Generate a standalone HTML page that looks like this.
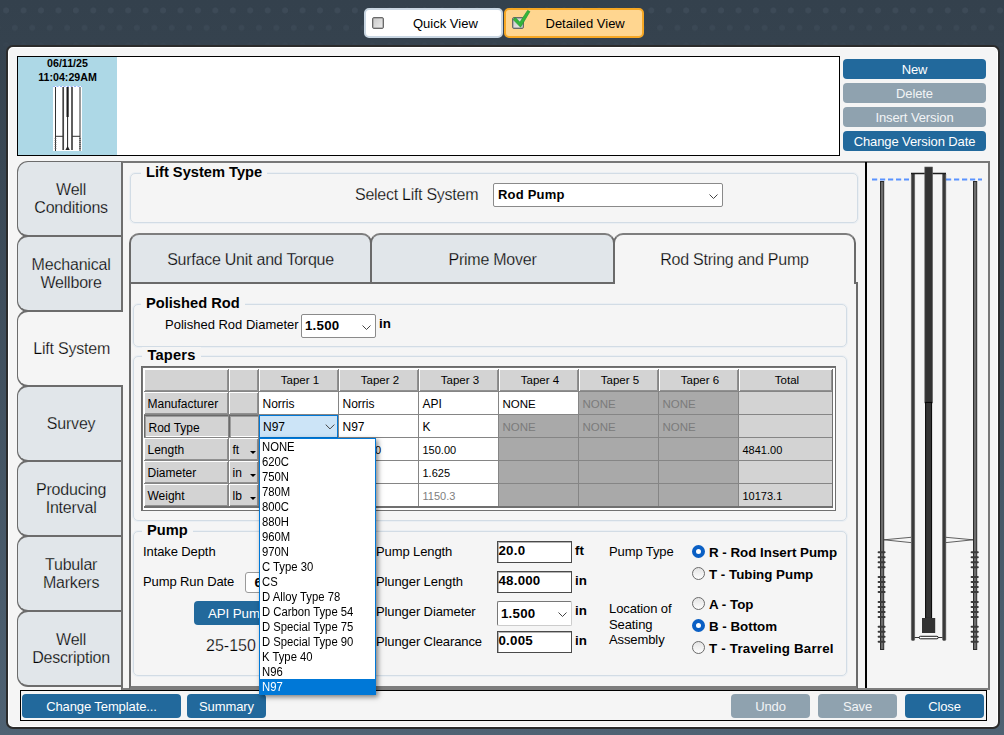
<!DOCTYPE html>
<html>
<head>
<meta charset="utf-8">
<title>Well Configuration</title>
<style>
*{box-sizing:border-box;margin:0;padding:0}
html,body{width:1004px;height:735px;overflow:hidden}
body{font-family:"Liberation Sans",sans-serif;font-size:14px;color:#000;background:linear-gradient(#34414d 0,#35424e 6%,#4f6273 100%);position:relative}
.abs{position:absolute}
#dots{left:0;top:0;width:1004px;height:46px;
 background-image:radial-gradient(circle,#3d4a57 0,#3d4a57 2.7px,transparent 3.4px),radial-gradient(circle,#3d4a57 0,#3d4a57 2.7px,transparent 3.4px);
 background-size:17.45px 35px,17.45px 35px;background-position:-2.6px -7.1px,6.1px 10.4px;
 -webkit-mask-image:linear-gradient(#000 0,#000 40%,rgba(0,0,0,.25) 100%);mask-image:linear-gradient(#000 0,#000 40%,rgba(0,0,0,.25) 100%)}
#main{left:6px;top:45px;width:994px;height:683.5px;background:#f5f5f5;border:2px solid #2b2b2b;border-radius:7px;box-shadow:inset 0 0 0 1px #fff}
.btn{position:absolute;background:#22699c;color:#fff;border-radius:4px;text-align:center;font-size:13px;letter-spacing:-.1px;line-height:21px;height:20px}
.btn.dis{background:#8fa2af;color:#f2f4f6}
/* top toggles */
.tog{position:absolute;top:8px;height:30px;border-radius:5px;font-size:13px;line-height:27px}
#qv{left:364px;width:139px;background:#fff;border:2px solid #c9d6e2}
#dv{left:504px;width:140px;background:#ffd690;border:2px solid #f6a724}
.cb{position:absolute;width:12px;height:12px;border:1px solid #6a6a6a;box-shadow:inset 0 0 0 .5px #8a8a8a;background:linear-gradient(135deg,#c9c9c9,#ececec);border-radius:2px}
/* version list */
#vlist{left:17px;top:56px;width:823px;height:100px;border:1px solid #000;background:#fff}
#vitem{left:0;top:0;width:99px;height:98px;background:#add8e6;text-align:center;font-weight:bold;font-size:10.67px;line-height:14px}
/* side tabs */
.stab{position:absolute;left:17.2px;width:104.8px;height:77.4px;background:#e1e6ea;border:solid #6c6c6c;border-width:2.4px 0 2.4px 1.7px;border-radius:11px 0 0 11px;font-size:16px;letter-spacing:-.2px;line-height:18px;text-align:center;display:flex;align-items:center;justify-content:center;padding-left:2px;padding-top:2px;color:#000;-webkit-text-stroke:.25px #e1e6ea}
.stab.act{background:#f5f5f5;-webkit-text-stroke-color:#f5f5f5}
#content{left:121px;top:161px;width:869px;height:529px;border-left:2px solid #6e6e6e;border-top:2px solid #777;border-right:2px solid #777;border-bottom:2px solid #7d7d7d;background:#f5f5f5}
.gb{position:absolute;border:1px solid #d2dce5;border-radius:5px;box-shadow:0 0 0 1px #ebeff3}
.gbt{position:absolute;font-weight:bold;font-size:14.67px;line-height:16px;background:#f5f5f5;padding:0 5px;white-space:nowrap}
.lbl{position:absolute;white-space:nowrap;font-size:13px;letter-spacing:-.1px;line-height:16px;margin-top:.6px}
.bl{position:absolute;white-space:nowrap;font-weight:bold;font-size:13.33px;line-height:16px}
/* inner tabs */
.itab{position:absolute;top:233px;height:49px;background:#e1e6ea;border:2px solid #6a6a6a;border-top-color:#7e7e7e;border-bottom:none;border-radius:10px 10px 0 0;font-size:16px;letter-spacing:-.24px;text-align:center;line-height:49.6px;color:#000;-webkit-text-stroke:.25px #e1e6ea}
.itab.act{background:#f5f5f5;height:51px;-webkit-text-stroke-color:#f5f5f5}
.inp{position:absolute;background:#fff;border:1px solid #4a4a4a;box-shadow:inset 1px 1px 0 #b4b4b4;font-weight:bold;font-size:13.33px;letter-spacing:.2px;line-height:17px;padding-left:.5px}
.combo{position:absolute;background:#fff;border:1px solid #8a8a8a;border-radius:2px;font-weight:bold;font-size:13.33px;letter-spacing:.2px}
.chev{position:absolute;right:4.5px;top:50%;width:9px;height:5px;margin-top:-1.5px}
/* grid */
#grid{left:141px;top:366px;width:695px;height:145px;background:#858585;border:1px solid #6b6b6b;border-right-color:#707070;border-bottom-color:#707070;box-shadow:inset 1px 1px 0 #747474,inset 2px 2px 0 #fff,inset -2px -2px 0 #fff,inset -3px -4px 0 #707070}
.c{position:absolute;height:22px;font-size:12px;line-height:24px;white-space:nowrap;overflow:hidden;padding-left:3.5px;color:#000}
.n{font-size:11px}
.s{font-size:11.5px}
.h{background:#d3d3d3;box-shadow:inset 1px 1px 0 #fff,inset -1px -1px 0 #909090}
.w{background:#fff}
.d{background:#a9a9a9;color:#7b7b7b}
.t{background:#d3d3d3}
.ctr{text-align:center;padding-left:3px;font-size:11.5px;line-height:22px}
.radio{position:absolute;width:13px;height:13px;border-radius:50%;border:1px solid #6a6a6a;background:linear-gradient(#e4e4e4,#fdfdfd)}
.radio.on{border:4px solid #0a5fc4;background:#fff}
.ua{position:absolute;left:21px;top:13px;width:0;height:0;border-left:3px solid transparent;border-right:3px solid transparent;border-top:3px solid #000}
.g{color:#808080}
.cur{box-shadow:inset 1px 1px 0 #6a6a6a,inset 2px 2px 0 #9c9c9c,inset 0 -1px 0 #fff;line-height:26px;padding-left:4.5px}
#dd{z-index:10;left:259px;top:438px;width:117px;height:257px;background:#fff;border:1px solid #0078d7;box-shadow:2px 2px 5px rgba(0,0,0,.5);font-size:12px;line-height:15px}
#dd .selbg{position:absolute;left:0;top:240px;width:115px;height:15px;background:#0078d7}
#dd .ddt{position:absolute;left:1.8px;top:.6px;width:130px;transform:scaleX(.94);transform-origin:0 0}
#dd .ddt div{height:15px;white-space:nowrap}
#dd .sel{color:#fff}
</style>
</head>
<body>
<div id="dots" class="abs"></div>

<!-- top toggles -->
<div id="qv" class="tog"><div class="cb" style="left:6px;top:7px"></div><span class="abs" style="left:47px;top:0">Quick View</span></div>
<div id="dv" class="tog"><div class="cb" style="left:6px;top:7px"></div>
<svg class="abs" style="left:4px;top:-2px" width="24" height="22" viewBox="510 8 24 22"><path d="M513.2 19.6L515.4 17.6L519.9 22.2L527.6 10.4L529.9 11.6L520.6 27.2Z" fill="#35b53c" stroke="#1f9a2c" stroke-width=".7" stroke-linejoin="round"/></svg>
<span class="abs" style="left:39.5px;top:0">Detailed View</span></div>

<div id="main" class="abs"></div>

<!-- version list -->
<div id="vlist" class="abs">
 <div id="vitem" class="abs"><div class="abs" style="left:0;top:-1px;width:99px">06/11/25<br>11:04:29AM</div>
  <svg class="abs" style="left:35px;top:29px" width="29" height="65" viewBox="53 86 29 65">
   <rect x="53" y="86" width="29" height="65" fill="#fff"/>
   <path d="M53 86.5H82" stroke="#9bb8ff" stroke-width="1" stroke-dasharray="2 1.5"/>
   <path d="M55.5 87V151M80 87V151" stroke="#333" stroke-width="1"/>
   <path d="M63.2 87V150M72 87V150" stroke="#444" stroke-width="1.7"/>
   <path d="M67.6 87V117" stroke="#1a1a1a" stroke-width="2.2"/>
   <path d="M67.6 117V149" stroke="#222" stroke-width="1"/>
   <path d="M55.5 136.3H63M72 136.3H80" stroke="#333" stroke-width="1"/>
   <path d="M55.5 138V150M80 138V150" stroke="#555" stroke-width="1.6" stroke-dasharray="1 1"/>
   <path d="M65.4 150L67.6 146L69.8 150Z" fill="#222"/>
  </svg>
 </div>
</div>

<!-- right buttons -->
<div class="btn" style="left:843px;top:59px;width:143px">New</div>
<div class="btn dis" style="left:843px;top:83px;width:143px">Delete</div>
<div class="btn dis" style="left:843px;top:107px;width:143px">Insert Version</div>
<div class="btn" style="left:843px;top:131px;width:143px">Change Version Date</div>

<!-- side tabs -->
<div class="stab" style="top:161px;border-top-width:1.5px;height:76.2px;padding-top:0">Well<br>Conditions</div>
<div class="stab" style="top:234.8px">Mechanical<br>Wellbore</div>
<div class="stab" style="top:384.8px">Survey</div>
<div class="stab" style="top:459.8px">Producing<br>Interval</div>
<div class="stab" style="top:534.8px">Tubular<br>Markers</div>
<div class="stab" style="top:609.8px;border-bottom-width:2px;height:77px">Well<br>Description</div>

<div id="content" class="abs"></div>
<div class="stab act" style="top:309.8px;width:106px">Lift System</div>

<!-- lift system type -->
<div class="gb" style="left:130px;top:173px;width:728px;height:50px"></div>
<div class="gbt" style="left:141px;top:164px">Lift System Type</div>
<div class="abs" style="left:355px;top:185.6px;font-size:16px;letter-spacing:-.27px;line-height:18px;white-space:nowrap;color:#000;-webkit-text-stroke:.25px #f5f5f5">Select Lift System</div>
<div class="combo" style="left:493px;top:183px;width:230px;height:24px;line-height:22px;padding-left:4px;font-size:13px">Rod Pump
 <svg class="chev" viewBox="0 0 9 5"><path d="M.5 .5L4.5 4.5L8.5 .5" fill="none" stroke="#444" stroke-width="1"/></svg></div>

<!-- inner tabs -->
<div class="abs" style="left:129px;top:282px;width:729px;height:408px;border:2px solid #6a6a6a;border-bottom:4px solid #7d7d7d;background:#f5f5f5"></div>
<div class="itab" style="left:129px;width:243px">Surface Unit and Torque</div>
<div class="itab" style="left:370px;width:245px">Prime Mover</div>
<div class="itab act" style="left:613px;width:243px">Rod String and Pump</div>

<!-- polished rod -->
<div class="gb" style="left:133px;top:304px;width:714px;height:43px"></div>
<div class="gbt" style="left:141px;top:295px">Polished Rod</div>
<div class="lbl" style="left:165px;top:316px;letter-spacing:0">Polished Rod Diameter</div>
<div class="combo" style="left:301px;top:314px;width:75px;height:24px;line-height:22px;padding-left:3px">1.500
 <svg class="chev" viewBox="0 0 9 5"><path d="M.5 .5L4.5 4.5L8.5 .5" fill="none" stroke="#444" stroke-width="1"/></svg></div>
<div class="bl" style="left:379px;top:316px">in</div>

<!-- tapers -->
<div class="gb" style="left:133px;top:356px;width:714px;height:165px"></div>
<div class="gbt" style="left:142.4px;top:347px;letter-spacing:.2px">Tapers</div>
<div id="grid" class="abs">
<div class="c h ctr" style="left:2px;top:2px;width:84px"></div>
<div class="c h ctr" style="left:87px;top:2px;width:29px"></div>
<div class="c h ctr" style="left:117px;top:2px;width:79px">Taper 1</div>
<div class="c h ctr" style="left:197px;top:2px;width:79px">Taper 2</div>
<div class="c h ctr" style="left:277px;top:2px;width:79px">Taper 3</div>
<div class="c h ctr" style="left:357px;top:2px;width:79px">Taper 4</div>
<div class="c h ctr" style="left:437px;top:2px;width:79px">Taper 5</div>
<div class="c h ctr" style="left:517px;top:2px;width:79px">Taper 6</div>
<div class="c h ctr" style="left:597px;top:2px;width:93px">Total</div>
<div class="c h" style="left:2px;top:25px;width:84px">Manufacturer</div>
<div class="c h" style="left:87px;top:25px;width:29px"></div>
<div class="c w" style="left:117px;top:25px;width:79px">Norris</div>
<div class="c w" style="left:197px;top:25px;width:79px">Norris</div>
<div class="c w" style="left:277px;top:25px;width:79px">API</div>
<div class="c w s" style="left:357px;top:25px;width:79px">NONE</div>
<div class="c d s" style="left:437px;top:25px;width:79px">NONE</div>
<div class="c d s" style="left:517px;top:25px;width:79px">NONE</div>
<div class="c t" style="left:597px;top:25px;width:93px"></div>
<div class="c h cur" style="left:2px;top:48px;width:84px">Rod Type</div>
<div class="c h cur" style="left:87px;top:48px;width:29px"></div>
<div class="c w" style="left:117px;top:48px;width:79px"></div>
<div class="c w" style="left:197px;top:48px;width:79px">N97</div>
<div class="c w" style="left:277px;top:48px;width:79px">K</div>
<div class="c d s" style="left:357px;top:48px;width:79px">NONE</div>
<div class="c d s" style="left:437px;top:48px;width:79px">NONE</div>
<div class="c d s" style="left:517px;top:48px;width:79px">NONE</div>
<div class="c t" style="left:597px;top:48px;width:93px"></div>
<div class="c h" style="left:2px;top:71px;width:84px">Length</div>
<div class="c h" style="left:87px;top:71px;width:29px">ft<i class="ua"></i></div>
<div class="c w" style="left:117px;top:71px;width:79px"></div>
<div class="c w" style="left:197px;top:71px;width:79px;padding-left:36px;font-size:11px">0</div>
<div class="c w n" style="left:277px;top:71px;width:79px">150.00</div>
<div class="c d" style="left:357px;top:71px;width:79px"></div>
<div class="c d" style="left:437px;top:71px;width:79px"></div>
<div class="c d" style="left:517px;top:71px;width:79px"></div>
<div class="c t n" style="left:597px;top:71px;width:93px">4841.00</div>
<div class="c h" style="left:2px;top:94px;width:84px">Diameter</div>
<div class="c h" style="left:87px;top:94px;width:29px">in<i class="ua"></i></div>
<div class="c w" style="left:117px;top:94px;width:79px"></div>
<div class="c w" style="left:197px;top:94px;width:79px"></div>
<div class="c w n" style="left:277px;top:94px;width:79px">1.625</div>
<div class="c d" style="left:357px;top:94px;width:79px"></div>
<div class="c d" style="left:437px;top:94px;width:79px"></div>
<div class="c d" style="left:517px;top:94px;width:79px"></div>
<div class="c t" style="left:597px;top:94px;width:93px"></div>
<div class="c h" style="left:2px;top:117px;width:84px">Weight</div>
<div class="c h" style="left:87px;top:117px;width:29px">lb<i class="ua"></i></div>
<div class="c w" style="left:117px;top:117px;width:79px"></div>
<div class="c w" style="left:197px;top:117px;width:79px"></div>
<div class="c w g n" style="left:277px;top:117px;width:79px">1150.3</div>
<div class="c d" style="left:357px;top:117px;width:79px"></div>
<div class="c d" style="left:437px;top:117px;width:79px"></div>
<div class="c d" style="left:517px;top:117px;width:79px"></div>
<div class="c t n" style="left:597px;top:117px;width:93px">10173.1</div>
<div class="abs" style="left:117px;top:48px;width:79px;height:23px;background:#cce4f7;border:1px solid #0078d7;font-size:12px;line-height:23px;padding-left:3px">N97<svg class="abs" style="left:65px;top:8px" width="10" height="6" viewBox="0 0 10 6"><path d="M.7 .6L5 4.9L9.3 .6" fill="none" stroke="#444" stroke-width="1"/></svg></div>
</div>

<!-- pump -->
<div class="gb" style="left:133px;top:531px;width:714px;height:145px"></div>
<div class="gbt" style="left:142px;top:522px">Pump</div>
<div class="lbl" style="left:143px;top:543px">Intake Depth</div>
<div class="lbl" style="left:143px;top:573px">Pump Run Date</div>
<div class="inp" style="left:244.5px;top:571.5px;width:60px;height:21.5px;border-color:#9a9a9a;box-shadow:none;border-radius:3px;padding-left:9px;line-height:20px">6</div>
<div class="btn" style="left:194px;top:601px;width:120px;height:24px;line-height:26px;font-size:13.33px;text-align:left;padding-left:14px">API Pump</div>
<div class="abs" style="left:206px;top:636px;font-size:16px;line-height:20px;white-space:nowrap;color:#000;-webkit-text-stroke:.25px #f5f5f5">25-150</div>

<div class="lbl" style="left:376px;top:543px">Pump Length</div>
<div class="lbl" style="left:376px;top:573px">Plunger Length</div>
<div class="lbl" style="left:376px;top:603px">Plunger Diameter</div>
<div class="lbl" style="left:376px;top:633px">Plunger Clearance</div>
<div class="inp" style="left:497px;top:541px;width:75px;height:22px">20.0</div>
<div class="inp" style="left:497px;top:571px;width:75px;height:22px">48.000</div>
<div class="combo" style="left:497px;top:601px;width:75px;height:25px;line-height:24px;padding-left:3px;border-color:#777 #ccc #ccc #777">1.500
 <svg class="chev" viewBox="0 0 9 5"><path d="M.5 .5L4.5 4.5L8.5 .5" fill="none" stroke="#444" stroke-width="1"/></svg></div>
<div class="inp" style="left:497px;top:631px;width:75px;height:22px">0.005</div>
<div class="bl" style="left:575px;top:543px">ft</div>
<div class="bl" style="left:575px;top:573px">in</div>
<div class="bl" style="left:575px;top:603px">in</div>
<div class="bl" style="left:575px;top:633px">in</div>

<div class="lbl" style="left:609px;top:543px">Pump Type</div>
<div class="lbl" style="left:609px;top:600.6px;line-height:15.5px">Location of<br>Seating<br>Assembly</div>
<div class="radio on" style="left:692px;top:545px"></div>
<div class="radio" style="left:692px;top:567px"></div>
<div class="radio" style="left:692px;top:597px"></div>
<div class="radio on" style="left:692px;top:619px"></div>
<div class="radio" style="left:692px;top:641px"></div>
<div class="bl" style="left:709px;top:545px;width:128px;overflow:hidden">R - Rod Insert Pump</div>
<div class="bl" style="left:709px;top:567px">T - Tubing Pump</div>
<div class="bl" style="left:709px;top:597px">A - Top</div>
<div class="bl" style="left:709px;top:619px">B - Bottom</div>
<div class="bl" style="left:709px;top:641px;letter-spacing:.2px">T - Traveling Barrel</div>

<!-- dropdown -->
<div id="dd" class="abs">
<div class="selbg"></div>
<div class="ddt"><div>NONE</div><div>620C</div><div>750N</div><div>780M</div><div>800C</div><div>880H</div><div>960M</div><div>970N</div><div>C Type 30</div><div>CS</div><div>D Alloy Type 78</div><div>D Carbon Type 54</div><div>D Special Type 75</div><div>D Special Type 90</div><div>K Type 40</div><div>N96</div><div class=sel>N97</div></div>
</div>

<!-- well diagram -->
<div class="abs" id="well" style="left:865px;top:162px;width:2px;height:526px;background:#000"></div>

<svg class="abs" style="left:860px;top:160px" width="140" height="530" viewBox="860 160 140 530">
<path d="M872 179.5H909M946 179.5H982" stroke="#5a93ff" stroke-width="2" stroke-dasharray="5.2 2.8"/>
<rect x="880.5" y="181.5" width="3.2" height="468" fill="#6c6c6c" stroke="#2c2c2c" stroke-width="1"/>
<rect x="973.5" y="181.5" width="3.2" height="468" fill="#6c6c6c" stroke="#2c2c2c" stroke-width="1"/>
<rect x="911.4" y="173.5" width="3.2" height="467" rx="1" fill="#3a3a3a" stroke="#4a4a4a" stroke-width=".5"/>
<rect x="942.6" y="173.5" width="3.2" height="467" rx="1" fill="#3a3a3a" stroke="#4a4a4a" stroke-width=".5"/>
<path d="M911 173.5H946" stroke="#1e1e1e" stroke-width="1.6"/>
<rect x="924.8" y="167" width="7.8" height="236" fill="#333" stroke="#666" stroke-width=".6"/>
<rect x="925.6" y="402.4" width="6" height="216" fill="#333" stroke="#000" stroke-width="1"/>
<rect x="922" y="618" width="13.2" height="15" fill="#333"/>
<path d="M914.5 637.5H942.5" stroke="#333" stroke-width="1"/>
<rect x="919.2" y="636.3" width="19" height="2.5" rx="1.25" fill="#fff" stroke="#000" stroke-width=".9"/>
<path d="M911 537.3L884 539.8L911 542.6M946 537.3L973 539.8L946 542.6" fill="none" stroke="#3a3a3a" stroke-width=".8"/>
<path d="M878.6 552.3H884.6M971.6 552.3H977.8M878.6 557.3H884.6M971.6 557.3H977.8M878.6 562.3H884.6M971.6 562.3H977.8M878.6 567.3H884.6M971.6 567.3H977.8M878.6 577.0H884.6M971.6 577.0H977.8M878.6 582.0H884.6M971.6 582.0H977.8M878.6 587.0H884.6M971.6 587.0H977.8M878.6 592.0H884.6M971.6 592.0H977.8M878.6 601.9H884.6M971.6 601.9H977.8M878.6 606.9H884.6M971.6 606.9H977.8M878.6 611.9H884.6M971.6 611.9H977.8M878.6 616.9H884.6M971.6 616.9H977.8M878.6 626.7H884.6M971.6 626.7H977.8M878.6 631.7H884.6M971.6 631.7H977.8M878.6 636.7H884.6M971.6 636.7H977.8M878.6 641.7H884.6M971.6 641.7H977.8" stroke="#3a3a3a" stroke-width="2" stroke-linecap="round"/>
</svg>

<!-- bottom bar -->
<div class="abs" style="left:20px;top:690px;width:967px;height:31px;border:1px solid #000"></div>
<div class="btn" style="left:22px;top:694px;width:159px;height:24px;line-height:25px">Change Template...</div>
<div class="btn" style="left:187px;top:694px;width:79px;height:24px;line-height:25px">Summary</div>
<div class="btn dis" style="left:731px;top:694px;width:79px;height:24px;line-height:25px">Undo</div>
<div class="btn dis" style="left:818px;top:694px;width:79px;height:24px;line-height:25px">Save</div>
<div class="btn" style="left:905px;top:694px;width:79px;height:24px;line-height:25px">Close</div>
</body>
</html>
